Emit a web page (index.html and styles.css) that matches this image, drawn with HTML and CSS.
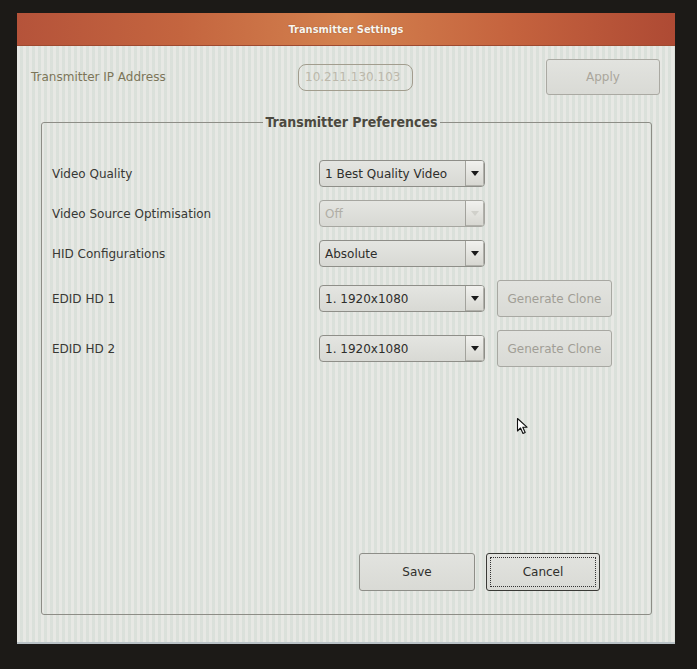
FILE: index.html
```html
<!DOCTYPE html>
<html>
<head>
<meta charset="utf-8">
<link rel="stylesheet" href="styles.css">
</head>
<body>
<div class="window">
  <div class="titlebar">Transmitter Settings</div>
  <div class="ip-row">
    <span class="ip-label">Transmitter IP Address</span>
    <div class="ip-field">10.211.130.103</div>
    <button class="btn btn-apply">Apply</button>
  </div>
  <fieldset class="prefs">
    <legend class="prefs-title">Transmitter Preferences</legend>
    <div class="prefs-body">
      <div class="grid">
        <span class="label">Video Quality</span>
        <div class="combo"><span class="combo-text">1 Best Quality Video</span><span class="combo-arrow"></span></div>
        <span></span>

        <span class="label">Video Source Optimisation</span>
        <div class="combo combo-disabled"><span class="combo-text">Off</span><span class="combo-arrow"></span></div>
        <span></span>

        <span class="label">HID Configurations</span>
        <div class="combo"><span class="combo-text">Absolute</span><span class="combo-arrow"></span></div>
        <span></span>

        <span class="label">EDID HD 1</span>
        <div class="combo"><span class="combo-text">1. 1920x1080</span><span class="combo-arrow"></span></div>
        <button class="btn btn-clone">Generate Clone</button>

        <span class="label">EDID HD 2</span>
        <div class="combo"><span class="combo-text">1. 1920x1080</span><span class="combo-arrow"></span></div>
        <button class="btn btn-clone">Generate Clone</button>
      </div>
      <div class="actions">
        <button class="btn btn-save">Save</button>
        <button class="btn btn-cancel"><span class="focus-ring">Cancel</span></button>
      </div>
    </div>
  </fieldset>
</div>
<svg class="cursor" width="14" height="18" viewBox="0 0 14 18"><path d="M1.5 1.5 L1.5 14 L4.5 11 L7 16.5 L9.2 15.5 L6.8 10.2 L11 10.2 Z" fill="#fff" stroke="#111" stroke-width="1.1" stroke-linejoin="round"/></svg>
</body>
</html>
```

FILE: styles.css
```css
html, body {
  margin: 0;
  padding: 0;
}
body {
  width: 697px;
  height: 669px;
  overflow: hidden;
  background: #1c1a17;
  font-family: "DejaVu Sans", Verdana, sans-serif;
  font-size: 12px;
  color: #383834;
  position: relative;
}
.window {
  margin: 13px 0 0 17px;
  width: 658px;
  height: 631px;
  display: flex;
  flex-direction: column;
  background-color: #e2e3de;
  background-image: repeating-linear-gradient(90deg, rgba(255,255,255,0.18) 0 3px, rgba(150,200,185,0.10) 3px 6px);
  box-sizing: border-box;
  border-bottom: 2px solid #b9c2c6;
}
.titlebar {
  height: 33px;
  flex: none;
  display: flex;
  align-items: center;
  justify-content: center;
  font-family: "DejaVu Sans Condensed", "DejaVu Sans", sans-serif;
  font-stretch: condensed;
  font-weight: bold;
  font-size: 11px;
  color: #fbf6ee;
  text-shadow: 0 0 1px rgba(80,30,10,0.6);
  background: linear-gradient(90deg, #b5533a 0%, #c4653f 25%, #d3814e 50%, #c5633e 75%, #ae4a34 100%);
  border-bottom: 1px solid #9e4a30;
  box-sizing: border-box;
}
.ip-row {
  display: flex;
  align-items: center;
  height: 36px;
  margin-top: 13px;
  padding: 0 15px 0 14px;
  flex: none;
}
.ip-label {
  width: 267px;
  color: #7c7558;
}
.ip-field {
  width: 115px;
  height: 27px;
  box-sizing: border-box;
  border: 1px solid #a29d8e;
  border-radius: 8px;
  padding-left: 6px;
  display: flex;
  align-items: center;
  color: #bcb8ab;
}
.btn {
  font-family: "DejaVu Sans", Verdana, sans-serif;
  font-size: 12px;
  box-sizing: border-box;
  border: 1px solid #9c9c96;
  border-radius: 3px;
  background: linear-gradient(#e2e3df, #d9dad5);
  padding: 0;
  display: flex;
  align-items: center;
  justify-content: center;
}
.btn-apply {
  margin-left: auto;
  width: 114px;
  height: 36px;
  color: #aaa69c;
  border-color: #aaa9a2;
}
.prefs {
  margin: 18px 0 0 24px;
  width: 611px;
  height: 502px;
  box-sizing: border-box;
  border: 1px solid #8d8d86;
  border-radius: 3px;
  padding: 29px 0 0 10px;
  min-width: 0;
}
.prefs-title {
  margin: 0 auto;
  padding: 0 2px;
  font-family: "DejaVu Sans Condensed", "DejaVu Sans", sans-serif;
  font-stretch: condensed;
  font-weight: bold;
  font-size: 14px;
  color: #4c493f;
  line-height: 18px;
}
.prefs-body {
  height: 431px;
  display: flex;
  flex-direction: column;
}
.grid {
  display: grid;
  grid-template-columns: 255px 166px 115px;
  column-gap: 12px;
  row-gap: 13px;
  align-items: center;
}
.label {
  color: #383834;
}
.combo {
  height: 27px;
  box-sizing: border-box;
  border: 1px solid #8e8e88;
  border-radius: 4px;
  background: linear-gradient(#e4e5e1, #d8d9d4);
  display: flex;
  align-items: stretch;
  overflow: hidden;
}
.combo-text {
  flex: 1;
  display: flex;
  align-items: center;
  padding-left: 5px;
  color: #2e2e2b;
}
.combo-arrow {
  width: 18px;
  border-left: 1px solid #a2a29c;
  background: linear-gradient(#f1f1ee, #d6d6d0);
  box-shadow: inset -1px -1px 0 #b0b0aa;
  display: flex;
  align-items: center;
  justify-content: center;
}
.combo-arrow::after {
  content: "";
  width: 0;
  height: 0;
  border-left: 4px solid transparent;
  border-right: 4px solid transparent;
  border-top: 5px solid #1a1a1a;
}
.combo-disabled {
  border-color: #a6a6a0;
}
.combo-disabled .combo-text {
  color: #b0aea6;
}
.combo-disabled .combo-arrow::after {
  border-top-color: #d0d0ca;
}
.btn-clone {
  height: 37px;
  color: #a19e96;
  border-color: #a8a8a2;
}
.actions {
  margin-top: auto;
  display: flex;
  justify-content: flex-end;
  align-items: center;
  gap: 11px;
  padding-right: 51px;
}
.btn-save {
  width: 116px;
  height: 38px;
  color: #2f2f2c;
  border-color: #8e8e88;
}
.btn-cancel {
  width: 114px;
  height: 38px;
  color: #2f2f2c;
  border-color: #3a3a36;
  padding: 3px;
}
.focus-ring {
  flex: 1;
  align-self: stretch;
  display: flex;
  align-items: center;
  justify-content: center;
  border: 1px dotted #333;
}
.cursor {
  position: absolute;
  left: 516px;
  top: 417px;
}
```
